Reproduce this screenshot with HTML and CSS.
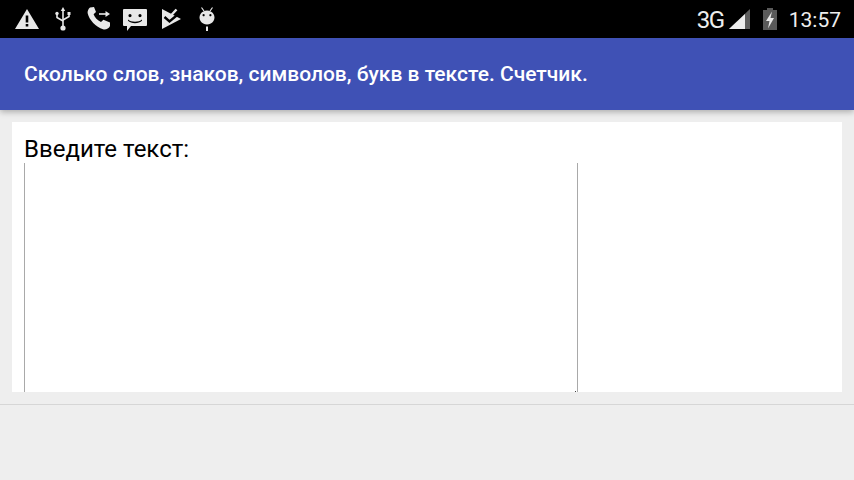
FILE: index.html
```html
<!DOCTYPE html>
<html lang="ru">
<head>
<meta charset="utf-8">
<title>Счетчик</title>
<link rel="stylesheet" href="styles.css">
</head>
<body>
<div class="status">
  <div class="status-left">
    <span class="slot"><svg width="26" height="24" viewBox="0 0 26 24"><path fill="#e8e8e8" fill-rule="evenodd" d="M13 2 L25 22 H1 Z M11.7 8.5 V15.5 H14.3 V8.5 Z M11.7 17 V19.6 H14.3 V17 Z"/></svg></span>
    <span class="slot"><svg width="18" height="26" viewBox="0 0 18 26"><g fill="none" stroke="#e8e8e8" stroke-width="1.6"><path d="M9 4 V20"/><path d="M3 8 V11.5 L9 15"/><path d="M15 8 V10.5 L9 14"/></g><g fill="#e8e8e8"><path d="M9 1 L11.2 5 H6.8 Z"/><circle cx="3" cy="7.5" r="1.7"/><rect x="13.5" y="6" width="3" height="3"/><circle cx="9" cy="22" r="2.6"/></g></svg></span>
    <span class="slot"><svg width="26" height="26" viewBox="0 0 26 26"><path fill="#e8e8e8" d="M4 1.5 L8 1 L10 6 L7.6 8.2 C8.6 11 11.5 14.5 15 16 L17.4 13.8 L24 16.5 L24 20 C23 22.5 19.5 24 17 23.2 C10 21 3 14 1.6 7 C1.4 4.8 2.5 2.8 4 1.5 Z"/><path fill="none" stroke="#e8e8e8" stroke-width="1.6" d="M13 8 H20"/><path fill="#e8e8e8" d="M19.5 5 L24 8 L19.5 11 Z"/></svg></span>
    <span class="slot"><svg class="msg" width="24" height="24" viewBox="0 0 24 24"><path fill="#e8e8e8" fill-rule="evenodd" d="M1 0 H23 Q24 0 24 1 V16 Q24 17 23 17 H8 L4 22 V17 H1 Q0 17 0 16 V1 Q0 0 1 0 Z M7 5 A1.6 1.6 0 1 0 7 8.2 A1.6 1.6 0 1 0 7 5 Z M17 5 A1.6 1.6 0 1 0 17 8.2 A1.6 1.6 0 1 0 17 5 Z M5 10.4 C8 13.4 16 13.4 19 10.4 L19 11.8 C16 15 8 15 5 11.8 Z"/></svg></span>
    <span class="slot"><svg width="20" height="24" viewBox="0 0 20 24"><path fill="#e8e8e8" d="M1 2 L20 12 L1 22 Z"/><path fill="none" stroke="#000" stroke-width="2.4" d="M3.5 10 L8.5 14.5 L18 6.5"/><path fill="none" stroke="#e8e8e8" stroke-width="2.4" d="M9 9.5 L15.5 2.5"/></svg></span>
    <span class="slot"><svg width="18" height="26" viewBox="0 0 18 26"><g fill="#e8e8e8"><path fill-rule="evenodd" d="M9 4.5 A7.5 7 0 1 1 8.99 4.5 Z M5.6 8 A1.1 1.1 0 1 0 5.61 8 Z M12.4 8 A1.1 1.1 0 1 0 12.41 8 Z"/><rect x="8" y="20.5" width="2" height="4.5"/></g><path stroke="#e8e8e8" stroke-width="1.2" d="M3.5 1.5 L6 5 M14.5 1.5 L12 5"/></svg></span>
  </div>
  <div class="status-right">
    <span class="net">3G</span>
    <svg class="signal" width="21" height="20" viewBox="0 0 21 20"><path fill="#5f5f5f" d="M21 0 V20 H0 Z"/><path fill="#eeeeee" d="M16 5 V20 H0 Z"/></svg>
    <svg class="battery" width="14" height="22" viewBox="0 0 14 22"><path fill="#5a5a5a" d="M4 0 H10 V2 H14 V22 H0 V2 H4 Z"/><path fill="#e8e8e8" d="M9 3.5 L3 13 H6.5 L5 20.5 L11 10 H7.5 Z"/></svg>
    <span class="clock">13:57</span>
  </div>
</div>
<header class="appbar">Сколько слов, знаков, символов, букв в тексте. Счетчик.</header>
<main class="content">
  <section class="card">
    <div class="label">Введите текст:</div>
    <div class="area"><span class="grip"></span></div>
  </section>
</main>
<footer class="bottom"></footer>
</body>
</html>
```

FILE: styles.css
```css
* { box-sizing: border-box; }
html, body { margin: 0; padding: 0; }
body {
  width: 854px;
  height: 480px;
  overflow: hidden;
  background: #eeeeee;
  font-family: Roboto, "Noto Sans", sans-serif;
  display: flex;
  flex-direction: column;
}
.status {
  height: 38px;
  flex: none;
  background: #000;
  display: flex;
  justify-content: space-between;
  align-items: center;
  padding: 0 13px 0 9px;
  color: #eeeeee;
}
.status-left { display: flex; align-items: center; }
.slot { width: 36px; display: flex; justify-content: center; align-items: center; }
.slot svg { display: block; }
.slot .msg { margin-top: 3px; }
.status-right { display: flex; align-items: center; }
.net { font-size: 24px; font-weight: 400; line-height: 38px; letter-spacing: -1.5px; margin-top: 1px; }
.signal { margin-left: 5px; margin-top: -1px; }
.battery { margin-left: 13px; margin-top: -1px; }
.clock { font-size: 21px; line-height: 38px; margin-left: 12px; margin-top: 1px; }
.appbar {
  height: 72px;
  flex: none;
  background: #3f51b5;
  color: #fff;
  font-size: 21px;
  font-weight: 500;
  line-height: 72px;
  padding-left: 24px;
  box-shadow: 0 2px 6px rgba(0, 0, 0, 0.28);
  position: relative;
}
.content { height: 295px; flex: none; padding: 12px 12px 0; border-bottom: 1px solid #d6d6d6; }
.card { height: 270px; background: #fff; padding-left: 12px; overflow: hidden; }
.label { font-size: 24px; line-height: 28px; color: #000; padding-top: 13px; height: 41px; }
.area {
  width: 554px;
  height: 229px;
  border-left: 1px solid #a9a9a9;
  border-right: 1px solid #a9a9a9;
  position: relative;
}
.grip { position: absolute; right: 1px; bottom: 0; width: 1px; height: 1px; background: #444; }
.bottom { flex: 1; }
```
